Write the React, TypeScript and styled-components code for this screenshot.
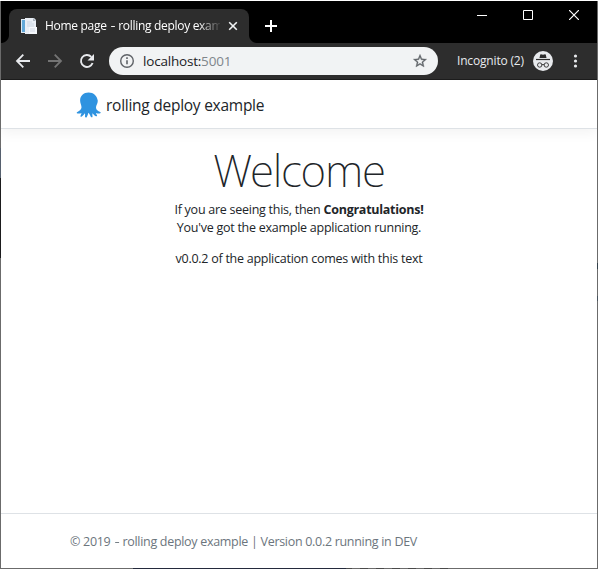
import React from 'react';
import styled, { createGlobalStyle } from 'styled-components';

const Global = createGlobalStyle`
  * { box-sizing: border-box; }
  body { margin: 0; background: #fff; font-family: "Open Sans", "Noto Sans", sans-serif; }
  svg { display: block; flex: none; }
`;

const Window = styled.div`
  width: 598px;
  height: 569px;
  padding: 1px;
  display: flex;
  flex-direction: column;
  background:
    linear-gradient(#fff, #fff) 0 0 / 598px 1px no-repeat,
    linear-gradient(to right, #6b6b6b 133px, #242a3c 133px 346px, transparent 346px 454px, #6b6b6b 454px) 0 568px / 598px 1px no-repeat,
    repeating-linear-gradient(to right, #6b6b6b 0 8px, #4a4a4a 8px 16px) 0 568px / 598px 1px no-repeat,
    linear-gradient(#6b6b6b 148px, #56606e 148px 178px, #1b1b1d 178px 258px, #6b6b6b 258px) 0 0 / 1px 569px no-repeat,
    linear-gradient(#6b6b6b 263px, #33404a 263px 269px, #6b6b6b 269px 296px, #46525c 296px 301px, #6b6b6b 301px) 597px 0 / 1px 569px no-repeat,
    #fff;
  overflow: hidden;
`;

const TitleBar = styled.header`
  flex: none;
  height: 42px;
  display: flex;
  background: #000;
  color: #fff;
`;

const Tab = styled.div`
  position: relative;
  width: 240px;
  height: 34px;
  margin: 8px 0 0 8px;
  padding: 0 11px 0 12px;
  display: flex;
  align-items: center;
  border-radius: 8px 8px 0 0;
  background: #2d2d2d;

  &::before, &::after {
    content: "";
    position: absolute;
    bottom: 0;
    width: 8px;
    height: 8px;
  }
  &::before { left: -8px; background: radial-gradient(circle at 0 0, #000 7.5px, #2d2d2d 8.5px); }
  &::after { right: -8px; background: radial-gradient(circle at 100% 0, #000 7.5px, #2d2d2d 8.5px); }
`;

const TabTitle = styled.span`
  width: 175px;
  margin: 0 8px 0 8px;
  overflow: hidden;
  white-space: nowrap;
  font-size: 12px;
  line-height: 18px;
  letter-spacing: -0.3px;
  mask-image: linear-gradient(to right, #000 153px, transparent 177px);
`;

const Dash = styled.span`
  display: inline-block;
  margin: 0 1.2px;
  transform: scaleX(1.3);
`;

const NewTab = styled.div`
  margin: 19px 0 0 16px;
`;

const WindowControls = styled.div`
  display: flex;
  gap: 36px;
  margin: 9px 18px 0 auto;
`;

const Toolbar = styled.div`
  flex: none;
  height: 37px;
  display: flex;
  align-items: center;
  padding: 0 13px 1px 14px;
  background: #2d2d2d;
  border-bottom: 1px solid #1c1c1c;
  color: #e8eaed;
`;

const NavButtons = styled.div`
  display: flex;
  gap: 16px;
  width: 94px;
`;

const AddressBar = styled.div`
  width: 329px;
  height: 28px;
  padding: 0 10px;
  display: flex;
  align-items: center;
  border-radius: 14px;
  background: #f1f3f4;
`;

const Url = styled.span`
  margin: 0 auto 0 8px;
  font-size: 13.5px;
  line-height: 20px;
  letter-spacing: -0.2px;
  color: #202124;
`;

const Port = styled.span`
  color: #80868b;
`;

const Profile = styled.div`
  display: flex;
  align-items: center;
  gap: 8px;
  margin: 0 auto 0 19px;
  font-size: 12px;
  letter-spacing: -0.17px;
  white-space: nowrap;
`;

const ProfileName = styled.span`
  width: 68px;
`;

const SiteHeader = styled.div`
  flex: none;
  height: 49px;
  padding: 1px 0 0 75px;
  display: flex;
  align-items: center;
  border-bottom: 1px solid #dee2e6;
  box-shadow: 0 4px 12px rgba(0, 0, 0, 0.05);
  clip-path: inset(0 0 -20px 0);
`;

const Brand = styled.span`
  margin-left: 5px;
  font-size: 15.5px;
  line-height: 24px;
  letter-spacing: -0.26px;
  color: #212529;
`;

const Main = styled.main`
  flex: 1;
  padding-top: 15px;
  text-align: center;
  color: #212529;
  font-size: 12.5px;
  letter-spacing: -0.26px;
`;

const Heading = styled.h1`
  margin: 0 0 4px;
  font-family: "Noto Sans", "Open Sans", sans-serif;
  font-size: 44px;
  font-weight: 200;
  line-height: 53px;
  letter-spacing: -1.25px;
`;

const Paragraph = styled.p`
  margin: 0 0 13px;
  line-height: 18px;
`;

const Footer = styled.footer`
  flex: none;
  height: 55px;
  padding: 1px 0 0 69px;
  border-top: 1px solid #dee2e6;
  color: #6c757d;
  font-size: 12.5px;
  line-height: 53px;
  letter-spacing: -0.3px;
  white-space: nowrap;
`;

const PageIcon = () => (
  <svg width="16" height="16" viewBox="0 0 16 16">
    <path d="M0 1h4v14H0z" fill="#dfe9f2" />
    <path d="M1 2h3v12H1z" fill="#62a8d8" />
    <path d="M4 0h9l2 2v14H4z" fill="#e9eef5" />
    <path d="M12 0l3 3h-3z" fill="#aab4c0" />
    <path d="M6 4h5M6 6h7M6 8h7" stroke="#cbd5e2" />
    <path d="M8 9h8v7H8z" fill="#f5f7fb" />
    <path d="M9 11h5M9 13h5" stroke="#d1d9e5" />
  </svg>
);

const Octopus = () => (
  <svg width="25" height="26" viewBox="0 0 25 26">
    <path
      d="M12.600.600C7.600.600 4.100 4 4.100 8.600c0 3.200 1.600 4.700 1.400 7-.2 2-2.300 3.700-4.500 4.600-.6.500-.3 1.100.5 1.300 1.700.3 2.900 0 4-.5-.2 1.100-.7 1.900-1 2.700-.3.900.6 1.200 1.300.7 1.300-.9 2.200-2 3.100-3.200.4 1.200.1 2.600.1 3.500.2 1 1.400 1 1.800.2.700-1.300 1.200-2.700 1.600-4.200 1 .6 1.700 2.500 2.400 4 .5.900 1.800.7 1.700-.3-.1-1.100-.2-2.100 0-3.200.9 1.100 2.100 2.500 3.400 3.100.9.300 1.500-.4 1-1.200-.5-.8-.9-1.400-1-2.200 1.300.5 2.900.9 4.300.4.700-.4.600-1 0-1.300-2.200-.9-4.100-2.200-4.200-4.300-.1-2.300 1.800-4.100 1.800-7C21 4 17.600.600 12.600.600z"
      fill="#2f93e0"
    />
  </svg>
);

const Incognito = () => (
  <svg width="20" height="20" viewBox="0 0 20 20">
    <circle cx="10" cy="10" r="10" fill="#e8eaed" />
    <path d="M6.500 7L7.200 3.700q.2-.6.800-.4l2 .4 2-.4q.6-.2.8.4L13.500 7z" fill="#2d2d2d" />
    <path d="M3 8.500h14" stroke="#2d2d2d" strokeWidth="1.200" />
    <g fill="none" stroke="#2d2d2d" strokeWidth=".9">
      <circle cx="6.700" cy="14" r="2.200" />
      <circle cx="13.300" cy="14" r="2.200" />
      <path d="M8.900 13.800q1.100-.7 2.200 0" />
    </g>
  </svg>
);

export default function App() {
  return (
    <>
      <Global />
      <Window>
        <TitleBar>
          <Tab>
            <PageIcon />
            <TabTitle>
              Home page <Dash>-</Dash> rolling deploy exam
            </TabTitle>
            <svg width="10" height="10" viewBox="0 0 10 10">
              <path d="M1.200 1.200l7.600 7.600M8.800 1.200L1.200 8.800" stroke="#f1f3f4" strokeWidth="1.600" />
            </svg>
          </Tab>
          <NewTab>
            <svg width="12" height="12" viewBox="0 0 12 12">
              <path d="M6 0v12M0 6h12" stroke="#fff" strokeWidth="2" />
            </svg>
          </NewTab>
          <WindowControls>
            <svg width="10" height="10" viewBox="0 0 10 10">
              <path d="M0 5.500h10" stroke="#fff" />
            </svg>
            <svg width="10" height="10" viewBox="0 0 10 10">
              <path d="M.5.5h9v9h-9z" fill="none" stroke="#fff" />
            </svg>
            <svg width="10" height="10" viewBox="0 0 10 10">
              <path d="M0 0l10 10M10 0L0 10" stroke="#fff" strokeWidth="1.200" />
            </svg>
          </WindowControls>
        </TitleBar>
        <Toolbar>
          <NavButtons>
            <svg width="16" height="16" viewBox="0 0 16 16">
              <path d="M15 8H2.500M8.300 1.700L2 8l6.300 6.300" fill="none" stroke="#e8eaed" strokeWidth="1.800" />
            </svg>
            <svg width="16" height="16" viewBox="0 0 16 16">
              <path d="M1 8h12.500M7.700 1.700L14 8l-6.300 6.300" fill="none" stroke="#747474" strokeWidth="1.800" />
            </svg>
            <svg width="16" height="16" viewBox="0 0 16 16">
              <path d="M13.600 10A6 6 0 1 1 12.300 3.800" fill="none" stroke="#e8eaed" strokeWidth="1.900" />
              <path d="M15 1v6.500H8.500z" fill="#e8eaed" />
            </svg>
          </NavButtons>
          <AddressBar>
            <svg width="16" height="16" viewBox="0 0 16 16">
              <circle cx="8" cy="8" r="6.300" fill="none" stroke="#5f6368" strokeWidth="1.400" />
              <path d="M8 7.200v4M8 4.300v1.600" stroke="#5f6368" strokeWidth="1.600" />
            </svg>
            <Url>
              localhost:<Port>5001</Port>
            </Url>
            <svg width="16" height="16" viewBox="0 0 24 24">
              <path
                d="M22 9.240l-7.190-.62L12 2 9.190 8.630 2 9.240l5.460 4.730L5.820 21 12 17.270 18.180 21l-1.630-7.030L22 9.240zM12 15.400l-3.760 2.270 1-4.280-3.320-2.880 4.380-.38L12 6.100l1.710 4.040 4.380.38-3.320 2.880 1 4.280L12 15.400z"
                fill="#5f6368"
                stroke="#5f6368"
                strokeWidth=".5"
              />
            </svg>
          </AddressBar>
          <Profile>
            <ProfileName>Incognito (2)</ProfileName>
            <Incognito />
          </Profile>
          <svg width="16" height="16" viewBox="0 0 16 16" fill="#e8eaed">
            <circle cx="7.500" cy="3" r="1.600" />
            <circle cx="7.500" cy="8" r="1.600" />
            <circle cx="7.500" cy="13" r="1.600" />
          </svg>
        </Toolbar>
        <SiteHeader>
          <Octopus />
          <Brand>rolling deploy example</Brand>
        </SiteHeader>
        <Main>
          <Heading>Welcome</Heading>
          <Paragraph>
            If you are seeing this, then <b>Congratulations!</b>
            <br />
            You've got the example application running.
          </Paragraph>
          <Paragraph>v0.0.2 of the application comes with this text</Paragraph>
        </Main>
        <Footer>
          © 2019 <Dash>-</Dash> rolling deploy example | Version 0.0.2 running in DEV
        </Footer>
      </Window>
    </>
  );
}
